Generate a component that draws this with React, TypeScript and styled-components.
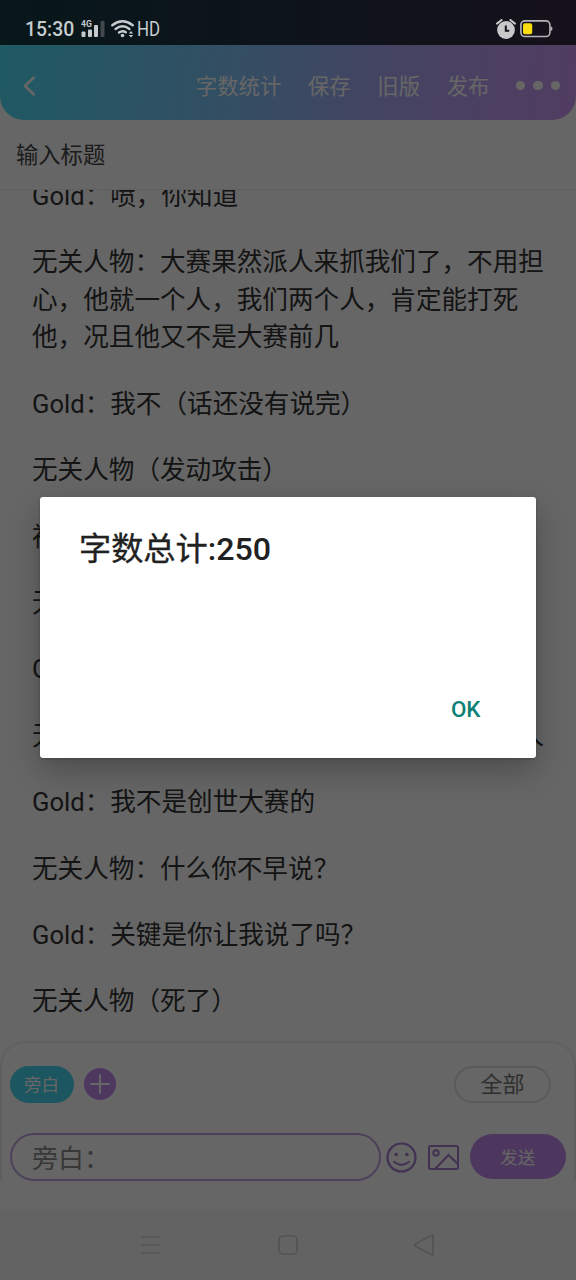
import React from "react";
import styled, { createGlobalStyle } from "styled-components";

const GlobalStyle = createGlobalStyle`
  * { box-sizing: border-box; }
  body {
    margin: 0;
    background: #666;
    font-family: Roboto, "Noto Sans CJK SC", sans-serif;
  }
  button { font: inherit; border: 0; background: none; padding: 0; }
`;

const Screen = styled.div`
  position: relative;
  width: 576px;
  height: 1280px;
  overflow: hidden;
  display: flex;
  flex-direction: column;
  background: #fff;
`;

const StatusBar = styled.div`
  position: relative;
  z-index: 2;
  flex: none;
  height: 45px;
  padding: 12.5px 23px 0 25px;
  display: flex;
  justify-content: space-between;
  align-items: flex-start;
  background: linear-gradient(90deg, #07171a 0%, #0d141b 45%, #15111a 100%);
  color: #c6cbce;
`;

const StatusGroup = styled.div<{ $gap: number }>`
  display: flex;
  align-items: center;
  gap: ${(p) => p.$gap}px;
  height: 33px;
  line-height: 34px;
`;

const Clock = styled.span`
  padding-top: 2px;
  font-size: 19.4px;
  font-weight: 500;
  width: 49px;
  white-space: nowrap;
`;

const Hd = styled.span`
  margin-left: -3.5px;
  padding-top: 2px;
  font-size: 19.4px;
  transform: scaleX(0.87);
  transform-origin: left center;
`;

const Header = styled.header`
  flex: none;
  height: 75px;
  padding: 6px 16px 0 22px;
  display: flex;
  align-items: center;
  color: #fff;
  border-radius: 0 0 24px 24px;
  background: linear-gradient(97deg, #4ee0fa 0%, #87bff8 45%, #a8aaf5 65%, #cc96f5 100%);
`;

const Nav = styled.nav`
  margin-left: auto;
  display: flex;
  align-items: center;
  gap: 26.6px;
  font-size: 21.4px;
  line-height: 30px;
  span { padding-top: 2px; }
`;

const Dots = styled.div`
  display: flex;
  gap: 8px;
  i { width: 9.3px; height: 9.3px; border-radius: 50%; background: #fff; }
`;

const TitleField = styled.div`
  flex: none;
  height: 70px;
  padding: 0 16px;
  line-height: 71px;
  font-size: 22.3px;
  color: #444;
  border-bottom: 1px solid #efefef;
`;

const Story = styled.main`
  flex: none;
  height: 851px;
  overflow: hidden;
  padding: 0 32px;
  color: #333;
  font-size: 25.6px;
  line-height: 37.7px;
`;

const Lines = styled.div`
  display: flex;
  flex-direction: column;
  gap: 28.7px;
  margin-top: -12.4px;
`;

const Paragraph = styled.p<{ $spread?: boolean }>`
  margin: 0;
  white-space: nowrap;
  display: ${(p) => (p.$spread ? "flex" : "block")};
  justify-content: space-between;
`;

const Composer = styled.section`
  flex: none;
  height: 140px;
  border: 2px solid #efecf2;
  border-bottom: 0;
  border-radius: 25px 25px 0 0;
  padding: 22px 8px 0 7.5px;
`;

const CastRow = styled.div`
  height: 38px;
  display: flex;
  align-items: center;
`;

const Chip = styled.button`
  width: 64px;
  height: 37px;
  border-radius: 19px;
  background: #48d6f0;
  color: #fff;
  font-size: 17.5px;
  line-height: 34px;
  padding-top: 2px;
`;

const AddButton = styled.button`
  width: 32px;
  height: 32px;
  margin-left: 10.5px;
  border-radius: 50%;
  background: #c48cef;
  display: grid;
  place-items: center;
`;

const AllButton = styled.button`
  margin: 0 15px 0 auto;
  width: 97px;
  height: 37px;
  border: 2px solid #e0e0e1;
  border-radius: 19px;
  color: #777;
  font-size: 22px;
  line-height: 33px;
`;

const Divider = styled.div`
  height: 1px;
  margin: 13px 74px 0;
  background: #f8f8f8;
`;

const InputRow = styled.div`
  display: flex;
  align-items: center;
  height: 48px;
  margin-top: 16px;
`;

const SpeechInput = styled.div`
  width: 371px;
  height: 48px;
  border: 2px solid #bca4dc;
  border-radius: 24px;
  padding-left: 20.5px;
  line-height: 48px;
  font-size: 26px;
  color: #8c8c8c;
`;

const IconSlot = styled.div<{ $left: number }>`
  display: flex;
  margin-left: ${(p) => p.$left}px;
`;

const SendButton = styled.button`
  width: 96.5px;
  height: 45px;
  margin: 0 0 1px 11px;
  border-radius: 23px;
  background: #c08aea;
  color: #fff;
  font-size: 17.5px;
`;

const SystemNav = styled.footer`
  flex: none;
  height: 71px;
  margin-top: 28px;
  padding: 1px 0 0 136px;
  display: flex;
  gap: 108px;
  align-items: center;
  background: #f8f8f8;
`;

const Bottom = styled.div`
  flex: none;
  display: flex;
  flex-direction: column;
`;

const Scrim = styled.div`
  position: absolute;
  inset: 0;
  z-index: 1;
  background: rgba(0, 0, 0, 0.6);
`;

const Dialog = styled.div`
  position: absolute;
  z-index: 3;
  left: 40px;
  top: 497px;
  width: 496px;
  height: 260.5px;
  padding: 29px 55.5px 31px 39px;
  display: flex;
  flex-direction: column;
  justify-content: space-between;
  border-radius: 3px;
  background: #fff;
  box-shadow: 0 13px 32px rgba(0, 0, 0, 0.25), 0 1px 3px rgba(0, 0, 0, 0.2);
`;

const DialogTitle = styled.h2`
  margin: 0;
  font-size: 32.2px;
  line-height: 46px;
  font-weight: 500;
  color: #212121;
  white-space: nowrap;
  span { font-weight: 400; -webkit-text-stroke: 0.35px #212121; }
`;

const OkButton = styled.button`
  align-self: flex-end;
  font-size: 22.4px;
  line-height: 36px;
  font-weight: 500;
  color: #0e8174;
`;

const SignalIcon = () => (
  <svg width="24" height="18" viewBox="0 0 24 18" fill="#c6cbce">
    <text x="0" y="6.8" fontSize="8.6" fontWeight="700" fontFamily="Roboto">4G</text>
    <rect x="0.5" y="11.5" width="4" height="5.5" rx="1" />
    <rect x="7" y="9.5" width="4" height="7.5" rx="1" />
    <rect x="13" y="5" width="4" height="12" rx="1" />
    <rect x="19.5" y="1" width="4" height="16" rx="1" fill="#42484d" />
  </svg>
);

const WifiIcon = () => (
  <svg width="23" height="18" viewBox="0 0 23 18" fill="none" stroke="#c6cbce" strokeWidth="2.4" strokeLinecap="round">
    <path d="M1.3 5.2Q11.5-2.6 21.7 5.2M4.6 9Q11.5 3.7 18.4 9M8 12.5Q11.5 10 14.8 12.3" />
    <circle cx="11.5" cy="15.5" r="1.8" fill="#c6cbce" stroke="none" />
    <path d="M17.8 13.6l2.2-2.7 2.2 2.7zM17.8 14.9l2.2 2.7 2.2-2.7z" fill="#c6cbce" stroke="none" />
  </svg>
);

const AlarmIcon = () => (
  <svg width="20" height="20" viewBox="0 0 20 20">
    <circle cx="10" cy="11" r="8.9" fill="#c9c8ca" />
    <path d="M1 4.6L5.6 1M19 4.6L14.4 1" stroke="#c9c8ca" strokeWidth="2" strokeLinecap="round" />
    <path d="M9.8 6.6v5.2h3.4" fill="none" stroke="#15121a" strokeWidth="2" />
  </svg>
);

const BatteryIcon = () => (
  <svg width="33" height="18" viewBox="0 0 33 18">
    <rect x="0.9" y="0.9" width="29" height="15.6" rx="4" fill="none" stroke="#b6b2ba" strokeWidth="1.6" />
    <rect x="3" y="3.2" width="9.2" height="11" rx="2" fill="#fbdc10" />
    <path d="M30.5 6.5q2 0 2 2.2t-2 2.2z" fill="#b6b2ba" />
  </svg>
);

const story = [
  "Gold：喷，你知道",
  "无关人物：大赛果然派人来抓我们了，不用担\n心，他就一个人，我们两个人，肯定能打死\n他，况且他又不是大赛前几",
  "Gold：我不（话还没有说完）",
  "无关人物（发动攻击）",
  "神",
  "无",
  "G",
];

const ending = [
  "Gold：我不是创世大赛的",
  "无关人物：什么你不早说？",
  "Gold：关键是你让我说了吗？",
  "无关人物（死了）",
];

const Multiline = ({ text }: { text: string }) => (
  <Paragraph>
    {text.split("\n").map((line, i) => (
      <React.Fragment key={line}>
        {i > 0 && <br />}
        {line}
      </React.Fragment>
    ))}
  </Paragraph>
);

export default function App() {
  return (
    <Screen lang="zh-CN">
      <GlobalStyle />
      <StatusBar>
        <StatusGroup $gap={6.5}>
          <Clock>15:30</Clock>
          <SignalIcon />
          <WifiIcon />
          <Hd>HD</Hd>
        </StatusGroup>
        <StatusGroup $gap={4}>
          <AlarmIcon />
          <BatteryIcon />
        </StatusGroup>
      </StatusBar>

      <Header>
        <svg width="14" height="20" viewBox="0 0 14 20" fill="none" stroke="#fff" strokeWidth="2.8" strokeLinecap="round" strokeLinejoin="round">
          <path d="M11.6 1.7L3 10l8.6 8.3" />
        </svg>
        <Nav>
          <span>字数统计</span>
          <span>保存</span>
          <span>旧版</span>
          <span>发布</span>
          <Dots><i /><i /><i /></Dots>
        </Nav>
      </Header>

      <TitleField>输入标题</TitleField>

      <Story>
        <Lines>
          {story.map((text) => <Multiline key={text} text={text} />)}
          <Paragraph $spread><span>无</span><span>人</span></Paragraph>
          {ending.map((text) => <Multiline key={text} text={text} />)}
        </Lines>
      </Story>

      <Bottom>
        <Composer>
          <CastRow>
            <Chip>旁白</Chip>
            <AddButton>
              <svg width="20" height="20" viewBox="0 0 20 20" stroke="#fff" strokeWidth="2" strokeLinecap="round">
                <path d="M10 1v18M1 10h18" />
              </svg>
            </AddButton>
            <AllButton>全部</AllButton>
          </CastRow>
          <Divider />
          <InputRow>
            <SpeechInput>旁白：</SpeechInput>
            <IconSlot $left={5.5}>
              <svg width="31" height="31" viewBox="0 0 31 31" fill="none" stroke="#a57ccf" strokeWidth="2.2" strokeLinecap="round">
                <circle cx="15.5" cy="15.5" r="14" />
                <path d="M8.2 20q7.3 5.6 14.6 0" />
                <circle cx="10.2" cy="12.5" r="1.8" fill="#a57ccf" stroke="none" />
                <circle cx="20.8" cy="12.5" r="1.8" fill="#a57ccf" stroke="none" />
              </svg>
            </IconSlot>
            <IconSlot $left={10.5}>
              <svg width="31" height="25" viewBox="0 0 31 25" fill="none" stroke="#a57ccf" strokeWidth="2">
                <rect x="1" y="1" width="29" height="23" rx="1.5" />
                <circle cx="8" cy="8" r="2.7" />
                <path d="M7.5 23.5L20.5 10 30 19" />
              </svg>
            </IconSlot>
            <SendButton>发送</SendButton>
          </InputRow>
        </Composer>
        <SystemNav>
          <svg width="30" height="24" viewBox="0 0 30 24" stroke="#d2d2d2" strokeWidth="1.7">
            <path d="M5 4h19M5 12h19M5 20h19" />
          </svg>
          <svg width="28" height="24" viewBox="0 0 28 24" fill="none" stroke="#cfcfcf" strokeWidth="1.7">
            <rect x="5" y="3" width="18" height="18" rx="4" />
          </svg>
          <svg width="28" height="24" viewBox="0 0 28 24" fill="none" stroke="#cfcfcf" strokeWidth="1.7" strokeLinejoin="round">
            <path d="M23 3.2v17.6q0 1.8-1.8.8L5.2 13q-1.6-1 0-2L21.2 2.4q1.8-1 1.8.8z" />
          </svg>
        </SystemNav>
      </Bottom>

      <Scrim />
      <Dialog role="dialog">
        <DialogTitle><span>字数总计</span>:250</DialogTitle>
        <OkButton>OK</OkButton>
      </Dialog>
    </Screen>
  );
}
